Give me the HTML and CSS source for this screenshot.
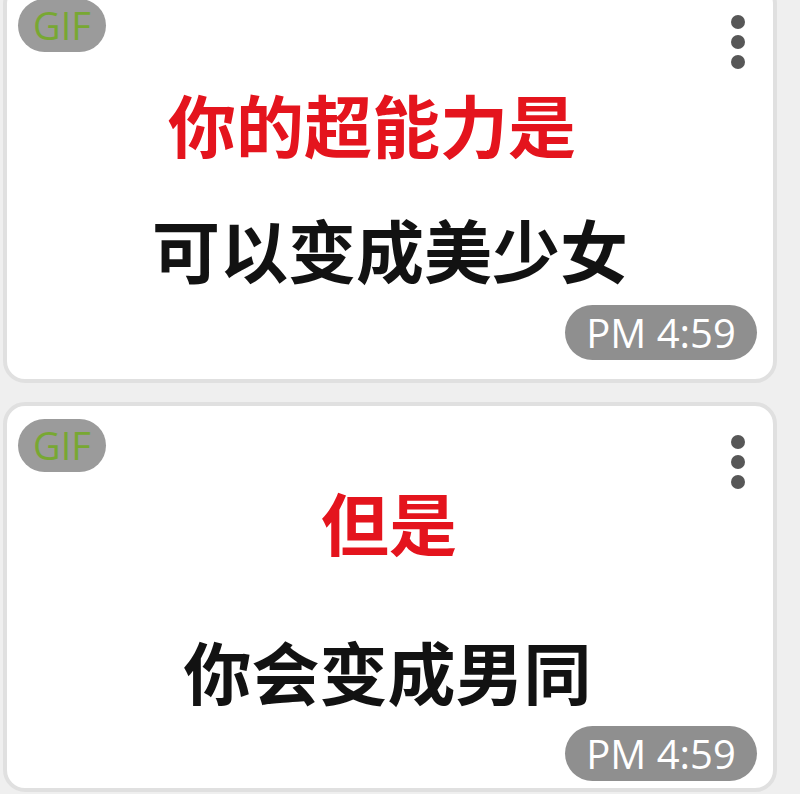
FILE: index.html
```html
<!DOCTYPE html>
<html lang="zh-CN">
<head>
    <meta charset="UTF-8">
    <meta name="viewport" content="width=device-width, initial-scale=1.0">
    <title>GIF</title>
    <link rel="stylesheet" href="styles.css">
</head>
<body>
<div class="chat">
    <div class="msg msg-first">
        <div class="gif">
            <div class="line red">你的超能力是</div>
            <div class="line dark">可以变成美少女</div>
        </div>
        <span class="badge">GIF</span>
        <span class="more"><i></i><i></i><i></i></span>
        <span class="time">PM 4:59</span>
    </div>
    <div class="msg msg-second">
        <div class="gif">
            <div class="line red">但是</div>
            <div class="line dark">你会变成男同</div>
        </div>
        <span class="badge">GIF</span>
        <span class="more"><i></i><i></i><i></i></span>
        <span class="time">PM 4:59</span>
    </div>
</div>
</body>
</html>
```

FILE: styles.css
```css
body {
    margin: 0;
    height: 794px;
    overflow: hidden;
    background: #efefef;
    font-family: 'Noto Sans CJK SC', 'Noto Sans', sans-serif;
}
.chat {
    display: flex;
    flex-direction: column;
    gap: 19px;
    padding-left: 3px;
    margin-top: -18px;
}
.msg {
    position: relative;
    width: 774px;
    background: #fff;
    border: 4px solid #e0e0e0;
    border-radius: 22px;
    box-sizing: border-box;
}
.msg-first {
    height: 401px;
}
.msg-second {
    height: 390px;
}
.gif {
    display: flex;
    flex-direction: column;
    align-items: center;
}
.line {
    font-size: 68px;
    font-weight: 700;
    line-height: 1;
}
.red {
    color: #e4141d;
}
.dark {
    color: #121212;
}
.msg-first .red {
    margin-top: 104px;
    margin-left: -36px;
}
.msg-first .dark {
    margin-top: 57px;
    margin-left: 0;
}
.msg-second .red {
    margin-top: 82px;
    margin-left: -2px;
}
.msg-second .dark {
    margin-top: 81px;
    margin-left: -5px;
}
.badge {
    position: absolute;
    top: 13px;
    left: 11px;
    width: 88px;
    height: 53px;
    border-radius: 27px;
    background: #9b9b9b;
    color: #78a832;
    font-family: 'Open Sans', 'Noto Sans', sans-serif;
    font-size: 38px;
    line-height: 53px;
    text-align: center;
}
.more {
    position: absolute;
    top: 29px;
    right: 28px;
    display: flex;
    flex-direction: column;
    gap: 6px;
}
.more i {
    width: 14px;
    height: 14px;
    border-radius: 50%;
    background: #575757;
}
.time {
    position: absolute;
    right: 16px;
    width: 192px;
    height: 55px;
    border-radius: 28px;
    background: #8f8f8f;
    color: #fff;
    font-family: 'Open Sans', 'Noto Sans', sans-serif;
    font-size: 40px;
    line-height: 55px;
    text-align: center;
}
.msg-first .time {
    bottom: 19px;
}
.msg-second .time {
    bottom: 7px;
}
```
